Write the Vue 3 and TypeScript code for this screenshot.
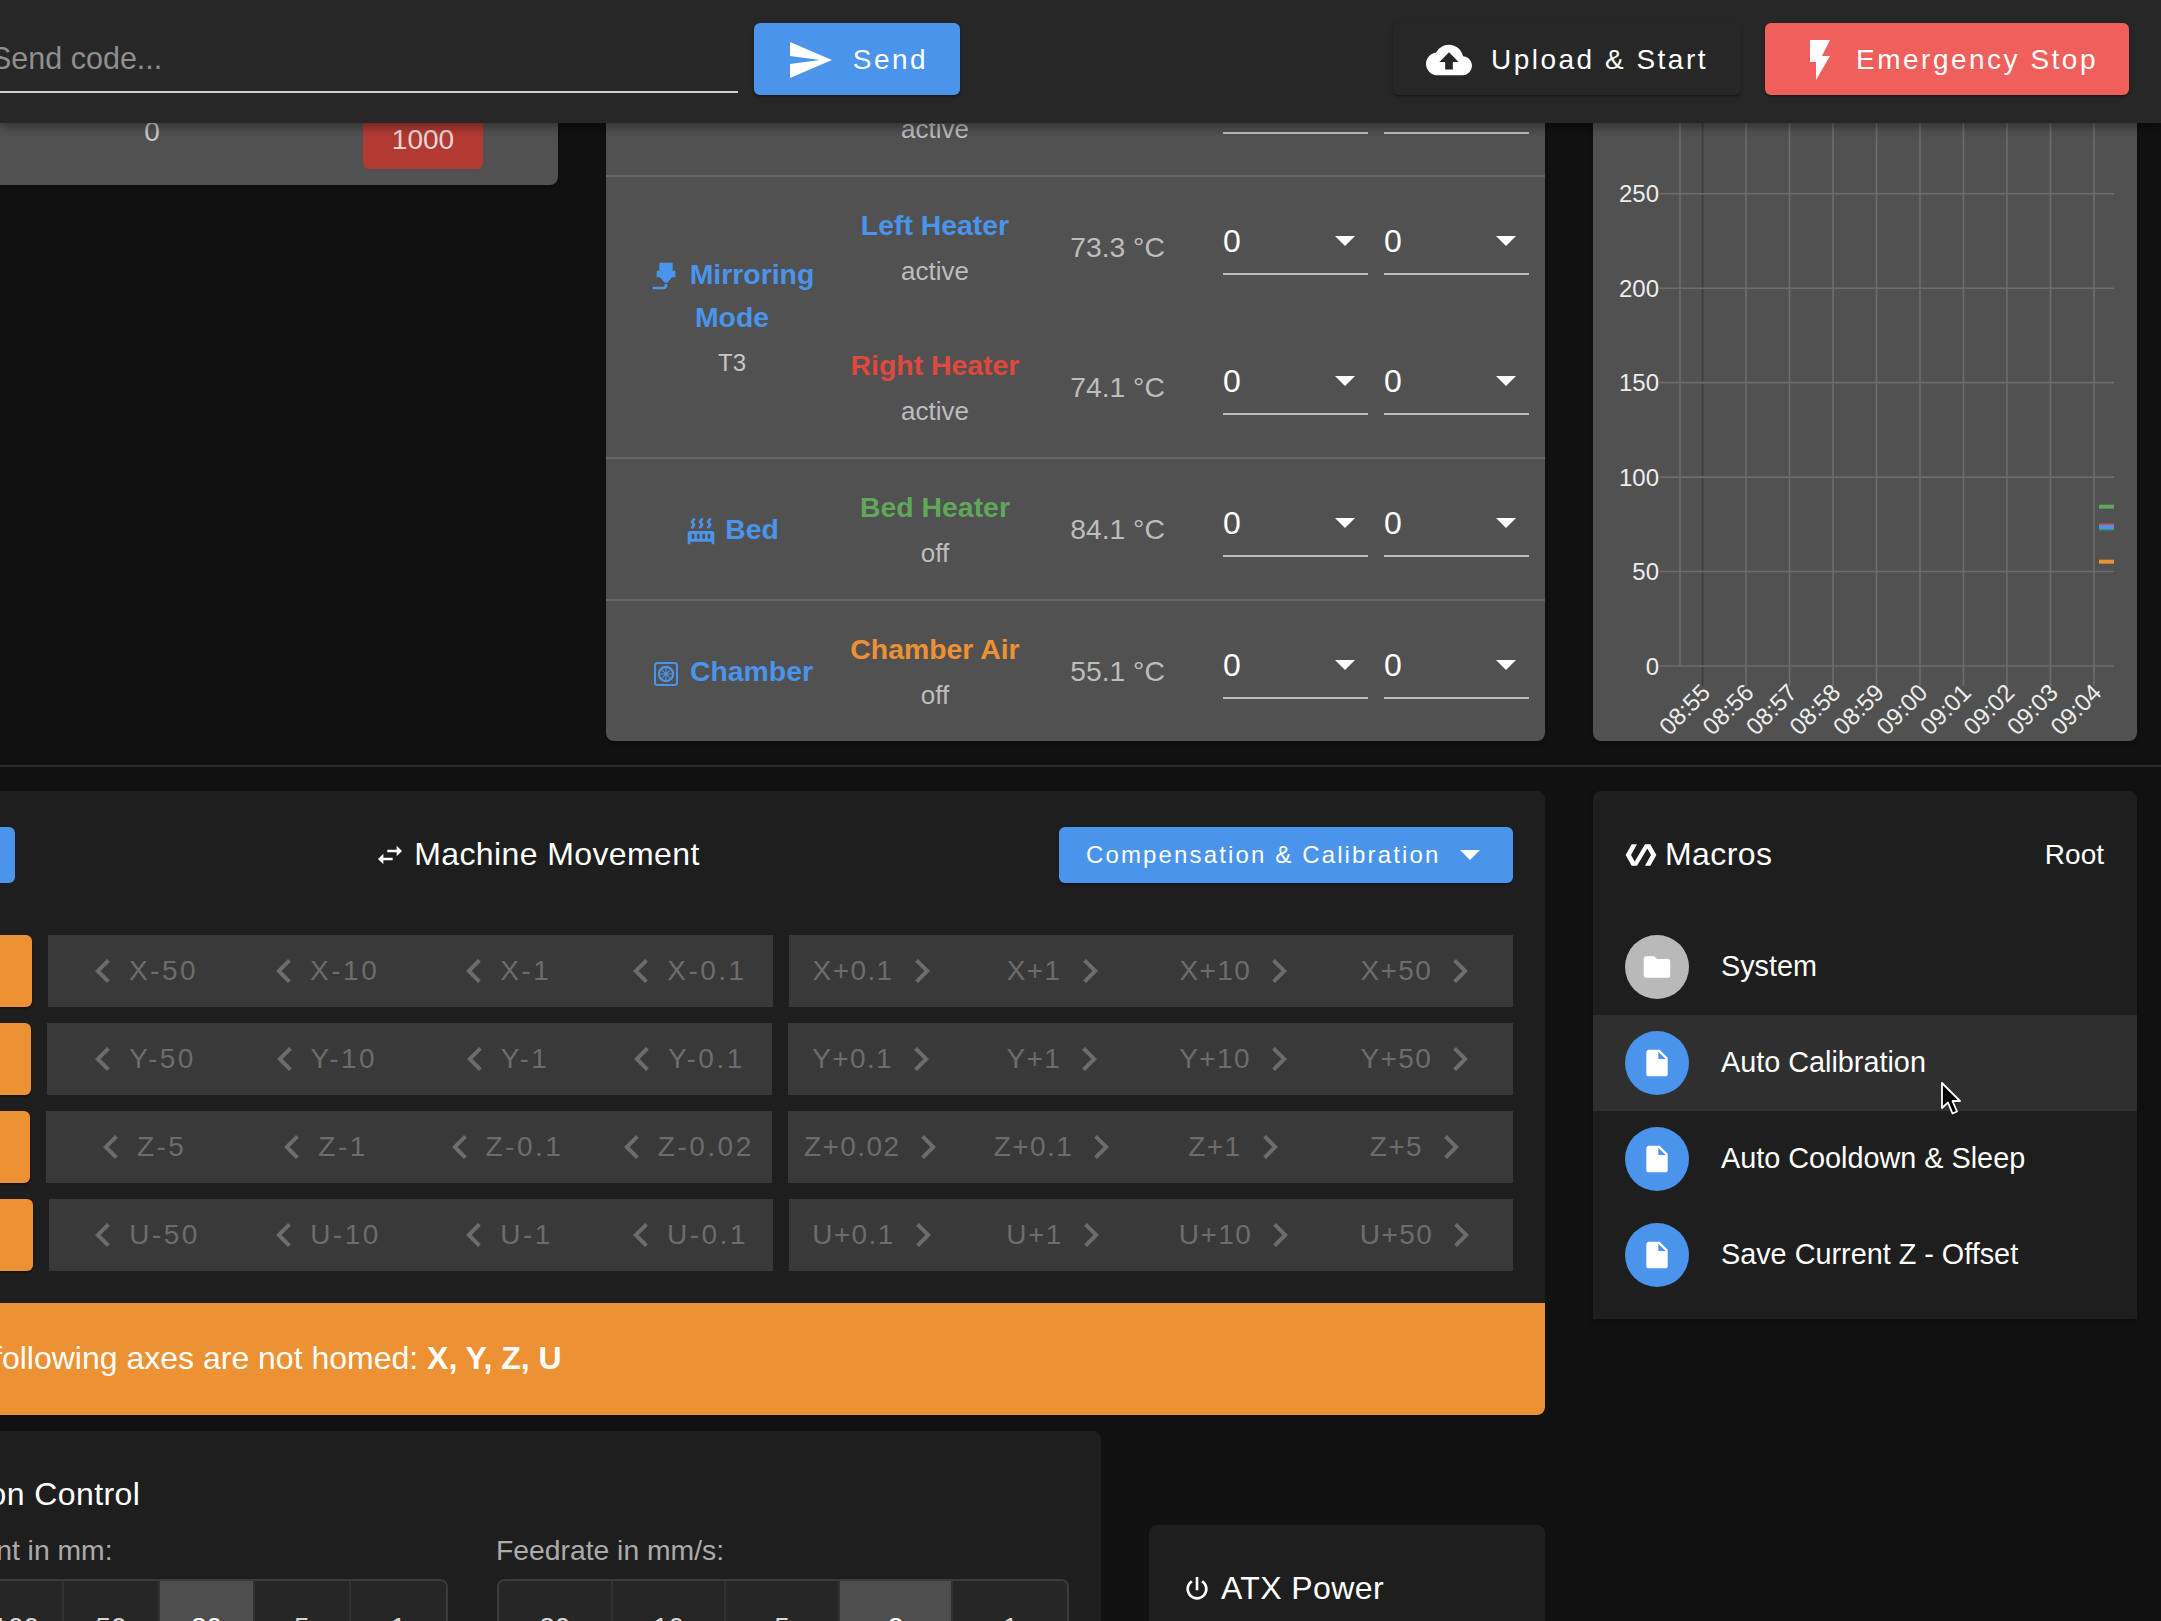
<template>
  <div class="page">
    <header class="topbar">
      <div class="code-input"><span>Send code...</span></div>
      <button class="btn btn-blue btn-send">
        <svg class="icon48" viewBox="0 0 24 24"><path :d="icons.send" /></svg>
        Send
      </button>
      <button class="btn btn-dark btn-upload">
        <svg class="icon46" viewBox="0 0 24 24"><path :d="icons.upload" /></svg>
        Upload &amp; Start
      </button>
      <button class="btn btn-red btn-stop">
        <svg class="icon48" viewBox="0 0 24 24"><path :d="icons.flash" /></svg>
        Emergency Stop
      </button>
    </header>

    <section class="top-row">
      <div class="panel fans-tail">
        <span class="fan-value">0</span>
        <span class="fan-limit">1000</span>
      </div>

      <div class="panel tools">
        <div class="tool-row row-cut">
          <div></div>
          <div class="heater-cut">active</div>
          <div></div>
          <div class="select-cut"><i></i><i></i></div>
        </div>

        <div v-for="tool in tools" :key="tool.name" class="tool-row">
          <div class="tool-name" :class="{ 'has-sub': tool.sub }">
            <div class="tool-title">
              <svg v-if="tool.icon === 'nozzle'" class="icon32" viewBox="0 0 24 24"><path :d="icons.nozzle" /></svg>
              <svg v-else-if="tool.icon === 'bed'" class="icon32" viewBox="0 0 24 24"><path :d="icons.radiator" /></svg>
              <svg v-else class="icon-chamber" viewBox="0 0 24 24">
                <rect x="1" y="1" width="22" height="22" rx="2.5" />
                <circle cx="12" cy="12" r="7.2" />
                <path d="M12 4.8V19.2M4.8 12H19.2M6.9 6.9L17.1 17.1M17.1 6.9L6.9 17.1" />
              </svg>{{ tool.name }}
            </div>
            <div v-if="tool.sub" class="tool-sub">{{ tool.sub }}</div>
          </div>
          <div class="heaters">
            <div v-for="h in tool.heaters" :key="h.name" class="heater">
              <div class="heater-name">
                <span class="heater-title" :class="h.color">{{ h.name }}</span>
                <span class="heater-state">{{ h.state }}</span>
              </div>
              <div class="heater-temp">{{ h.temp }}</div>
              <div class="heater-select">0<svg viewBox="0 0 20 10"><path d="M0 0H20L10 10Z" /></svg></div>
              <div class="heater-select">0<svg viewBox="0 0 20 10"><path d="M0 0H20L10 10Z" /></svg></div>
            </div>
          </div>
        </div>
      </div>

      <div class="panel chart">
        <svg viewBox="1593 123 544 617" width="544" height="617">
          <line x1="1680" y1="123" x2="1680" y2="666" class="grid" />
          <line v-for="(t, i) in times" :key="t" :x1="tickX(i)" y1="123" :x2="tickX(i)" y2="686" :class="i === 0 ? 'grid-dark' : 'grid'" />
          <g v-for="v in yTicks" :key="v">
            <line x1="1660" :y1="tickY(v)" x2="2114" :y2="tickY(v)" class="grid" />
            <text x="1659" :y="tickY(v) + 8.5" text-anchor="end" class="axis">{{ v }}</text>
          </g>
          <text v-for="(t, i) in times" :key="t + 'l'" text-anchor="end" class="axis" :transform="`translate(${tickX(i) + 9} 694) rotate(-45)`">{{ t }}</text>
          <line x1="2099" y1="506.7" x2="2114" y2="506.7" class="trace" stroke="#5fa85a" />
          <line x1="2099" y1="525.5" x2="2114" y2="525.5" class="trace" stroke="#e0483e" />
          <line x1="2099" y1="528.5" x2="2114" y2="528.5" class="trace" stroke="#3f8a70" />
          <line x1="2099" y1="527" x2="2114" y2="527" class="trace" stroke="#4a94ec" />
          <line x1="2099" y1="561.7" x2="2114" y2="561.7" class="trace" stroke="#ed9234" />
        </svg>
      </div>
    </section>

    <div class="rule"></div>

    <section class="lower">
      <div class="lower-main">
        <div class="movement">
          <div class="movement-head">
            <span class="home-tail"></span>
            <h3 class="card-title">
              <svg class="icon32" viewBox="0 0 24 24"><path :d="icons.swap" /></svg>Machine Movement
            </h3>
            <button class="btn-comp">
              Compensation &amp; Calibration
              <svg viewBox="0 0 20 10"><path d="M0 0H20L10 10Z" /></svg>
            </button>
          </div>
          <div v-for="row in moveRows" :key="row.axis" class="move-row" :style="{ gridTemplateColumns: `${row.homeWidth}px 1fr 1fr` }">
            <div class="home-btn"></div>
            <div class="move-group">
              <div v-for="s in row.steps" :key="s" class="move-step">
                <svg class="icon48" viewBox="0 0 24 24"><path :d="icons.left" /></svg>{{ row.axis }}-{{ s }}
              </div>
            </div>
            <div class="move-group move-plus">
              <div v-for="s in [...row.steps].reverse()" :key="s" class="move-step">
                {{ row.axis }}+{{ s }}<svg class="icon48" viewBox="0 0 24 24"><path :d="icons.right" /></svg>
              </div>
            </div>
          </div>
        </div>

        <div class="alert">
          <span>The following axes are not homed: <strong>X, Y, Z, U</strong></span>
        </div>

        <div class="bottom-row">
          <div class="extrusion">
            <h3 class="card-title extrusion-title">Extrusion Control</h3>
            <div class="extrusion-cols">
              <div class="amount-col">
                <div class="field-label label-amount">Feed amount in mm:</div>
                <div class="toggle toggle-amount">
                  <span v-for="a in amounts" :key="a" :class="{ on: a === 20 }">{{ a }}</span>
                </div>
              </div>
              <div class="rate-col">
                <div class="field-label">Feedrate in mm/s:</div>
                <div class="toggle toggle-rate">
                  <span v-for="r in rates" :key="r" :class="{ on: r === 2 }">{{ r }}</span>
                </div>
              </div>
            </div>
          </div>

          <div class="atx">
            <h3 class="card-title">
              <svg class="icon32" viewBox="0 0 24 24"><path :d="icons.power" /></svg>ATX Power
            </h3>
          </div>
        </div>
      </div>

      <aside class="macros">
        <div class="macros-head">
          <h3 class="card-title">
            <svg class="icon32" viewBox="0 0 24 24"><path :d="icons.polymer" /></svg>Macros
          </h3>
          <span class="macros-root">Root</span>
        </div>
        <div v-for="m in macros" :key="m.name" class="macro" :class="{ hover: m.hover }">
          <span class="avatar" :class="{ folder: m.folder }">
            <svg class="icon32" viewBox="0 0 24 24"><path :d="m.folder ? icons.folder : icons.file" /></svg>
          </span>
          <span class="macro-name">{{ m.name }}</span>
          <svg v-if="m.hover" class="cursor" viewBox="0 0 22 36">
            <path d="M2 2V27L8 21.5L12.5 32.5L17 30.5L12.5 20H20Z" />
          </svg>
        </div>
      </aside>
    </section>
  </div>
</template>

<script setup lang="ts">
interface Heater {
  name: string
  color: string
  state: string
  temp: string
}

interface Tool {
  name: string
  icon: 'nozzle' | 'bed' | 'chamber'
  sub?: string
  heaters: Heater[]
}

const icons = {
  send: 'M2,21L23,12L2,3V10L17,12L2,14V21Z',
  upload: 'M14,13V17H10V13H7L12,8L17,13M19.35,10.03C18.67,6.59 15.64,4 12,4C9.11,4 6.6,5.64 5.35,8.03C2.34,8.36 0,10.9 0,14A6,6 0 0,0 6,20H19A5,5 0 0,0 24,15C24,12.36 21.95,10.22 19.35,10.03Z',
  flash: 'M7,2V13H10V22L17,10H13L17,2H7Z',
  nozzle: 'M7,2H17V8H19V13H16.5L13,17H11L7.5,13H5V8H7V2M10,22H2V20H10A1,1 0 0,0 11,19V18H13V19A3,3 0 0,1 10,22Z',
  radiator: 'M7.95,3L6.53,5.19L7.95,7.4H7.94L5.95,10.5L4.22,9.6L5.64,7.39L4.22,5.19L6.22,2.09L7.95,3M13.95,2.89L12.53,5.1L13.95,7.3L13.94,7.31L11.95,10.4L10.22,9.5L11.64,7.3L10.22,5.1L12.22,2L13.95,2.89M20,2.89L18.56,5.1L20,7.3V7.31L18,10.4L16.25,9.5L17.67,7.3L16.25,5.1L18.25,2L20,2.89M2,22V14A2,2 0 0,1 4,12H20A2,2 0 0,1 22,14V22H20V20H4V22H2M6,14A1,1 0 0,0 5,15V17A1,1 0 0,0 6,18A1,1 0 0,0 7,17V15A1,1 0 0,0 6,14M10,14A1,1 0 0,0 9,15V17A1,1 0 0,0 10,18A1,1 0 0,0 11,17V15A1,1 0 0,0 10,14M14,14A1,1 0 0,0 13,15V17A1,1 0 0,0 14,18A1,1 0 0,0 15,17V15A1,1 0 0,0 14,14M18,14A1,1 0 0,0 17,15V17A1,1 0 0,0 18,18A1,1 0 0,0 19,17V15A1,1 0 0,0 18,14Z',
  swap: 'M21,9L17,5V8H10V10H17V13M7,11L3,15L7,19V16H14V14H7V11Z',
  left: 'M15.41,16.58L10.83,12L15.41,7.41L14,6L8,12L14,18L15.41,16.58Z',
  right: 'M8.59,16.58L13.17,12L8.59,7.41L10,6L16,12L10,18L8.59,16.58Z',
  power: 'M16.56,5.44L15.11,6.89C16.84,7.94 18,9.83 18,12A6,6 0 0,1 12,18A6,6 0 0,1 6,12C6,9.83 7.16,7.94 8.88,6.88L7.44,5.44C5.36,6.88 4,9.28 4,12A8,8 0 0,0 12,20A8,8 0 0,0 20,12C20,9.28 18.64,6.88 16.56,5.44M13,3H11V13H13',
  polymer: 'M19,4H15L7.27,16.84L4.5,12L9,4H5L.5,12L5,20H9L16.73,7.16L19.5,12L15,20H19L23.5,12L19,4Z',
  folder: 'M10,4H4C2.89,4 2,4.89 2,6V18A2,2 0 0,0 4,20H20A2,2 0 0,0 22,18V8C22,6.89 21.1,6 20,6H12L10,4Z',
  file: 'M13,9V3.5L18.5,9M6,2C4.89,2 4,2.89 4,4V20A2,2 0 0,0 6,22H18A2,2 0 0,0 20,20V8L14,2H6Z'
}

const tools: Tool[] = [
  {
    name: 'Mirroring Mode',
    icon: 'nozzle',
    sub: 'T3',
    heaters: [
      { name: 'Left Heater', color: 'c-blue', state: 'active', temp: '73.3 °C' },
      { name: 'Right Heater', color: 'c-red', state: 'active', temp: '74.1 °C' }
    ]
  },
  {
    name: 'Bed',
    icon: 'bed',
    heaters: [{ name: 'Bed Heater', color: 'c-green', state: 'off', temp: '84.1 °C' }]
  },
  {
    name: 'Chamber',
    icon: 'chamber',
    heaters: [{ name: 'Chamber Air', color: 'c-orange', state: 'off', temp: '55.1 °C' }]
  }
]

const times = ['08:55', '08:56', '08:57', '08:58', '08:59', '09:00', '09:01', '09:02', '09:03', '09:04']
const yTicks = [250, 200, 150, 100, 50, 0]

// chart scale, in reference pixels
const tickX = (i: number) => 1702.6 + i * 43.48
const tickY = (v: number) => 666 - v * 1.889

const xySteps = [50, 10, 1, 0.1]
const moveRows = [
  { axis: 'X', homeWidth: 32, steps: xySteps },
  { axis: 'Y', homeWidth: 31, steps: xySteps },
  { axis: 'Z', homeWidth: 30, steps: [5, 1, 0.1, 0.02] },
  { axis: 'U', homeWidth: 33, steps: xySteps }
]

const amounts = [100, 50, 20, 5, 1]
const rates = [20, 10, 5, 2, 1]

const macros = [
  { name: 'System', folder: true, hover: false },
  { name: 'Auto Calibration', folder: false, hover: true },
  { name: 'Auto Cooldown & Sleep', folder: false, hover: false },
  { name: 'Save Current Z - Offset', folder: false, hover: false }
]
</script>

<style>
html,
body {
  margin: 0;
  background: #111111;
}
</style>

<style scoped>
.page {
  position: relative;
  width: 2161px;
  height: 1621px;
  overflow: hidden;
  background: #111111;
  color: #fff;
  font-family: "Liberation Sans", Arial, sans-serif;
}

svg {
  fill: currentColor;
  flex: none;
}

.icon32 { width: 32px; height: 32px; }
.icon46 { width: 46px; height: 46px; }
.icon48 { width: 48px; height: 48px; }

/* top bar */
.topbar {
  position: relative;
  z-index: 2;
  display: flex;
  align-items: center;
  height: 123px;
  padding: 0 32px 5px 0;
  box-sizing: border-box;
  background: #272727;
  box-shadow: 0 4px 10px rgba(0, 0, 0, 0.4);
}

.code-input {
  flex: none;
  width: 738px;
  height: 70px;
  margin-top: -2px;
  box-sizing: border-box;
  border-bottom: 2px solid #cfcfcf;
  color: #8f8f8f;
  font-size: 30.5px;
  line-height: 70px;
  overflow: hidden;
  white-space: nowrap;
}

.code-input span {
  display: block;
  margin-left: -9px;
}

.btn {
  display: flex;
  align-items: center;
  justify-content: center;
  gap: 19px;
  height: 72px;
  padding: 2px 0 0;
  box-sizing: border-box;
  border: 0;
  border-radius: 6px;
  color: #fff;
  font-family: inherit;
  font-size: 28px;
  letter-spacing: 2.5px;
  box-shadow: 0 3px 1px -2px rgba(0, 0, 0, 0.2), 0 2px 2px rgba(0, 0, 0, 0.14), 0 1px 5px rgba(0, 0, 0, 0.12);
}

.btn-blue { background: #4a94ec; }
.btn-dark { background: #272727; }
.btn-red { background: #ef5f5b; }

.btn-send { width: 206px; margin-left: 16px; }
.btn-upload { width: 348px; margin-left: auto; }
.btn-stop { width: 364px; margin-left: 24px; gap: 12px; }

/* upper row */
.top-row {
  display: flex;
  align-items: flex-start;
  height: 642px;
}

.panel {
  background: #515151;
  box-sizing: border-box;
  box-shadow: 0 3px 3px -2px rgba(0, 0, 0, 0.2), 0 3px 4px rgba(0, 0, 0, 0.14);
  border-radius: 0 0 8px 8px;
}

.fans-tail {
  display: flex;
  flex: none;
  align-items: flex-start;
  width: 578px;
  height: 62px;
  margin-left: -20px;
  margin-right: 48px;
  color: #c9c9c9;
  font-size: 28px;
}

.fan-value {
  width: 344px;
  margin-top: -7px;
  line-height: 32px;
  text-align: center;
}

.fan-limit {
  width: 120px;
  height: 46px;
  margin-left: 39px;
  padding-top: 1px;
  box-sizing: border-box;
  line-height: 32px;
  text-align: center;
  background: #b33a32;
  border-radius: 0 0 6px 6px;
  color: #e6d6d4;
}

.tools {
  flex: none;
  width: 939px;
  height: 618px;
}

.tool-row {
  display: grid;
  grid-template-columns: 236px 1fr;
  border-bottom: 2px solid #676767;
}

.tool-row:last-child {
  border-bottom: 0;
}

.row-cut {
  grid-template-columns: 236px 186px 179px 1fr;
  height: 54px;
  box-sizing: border-box;
}

.heater-cut {
  color: #bdbdbd;
  font-size: 26px;
  line-height: 12px;
  text-align: center;
}

.select-cut {
  display: flex;
  gap: 16px;
  padding-left: 16px;
}

.select-cut i {
  width: 145px;
  height: 9px;
  border-bottom: 2px solid #bdbdbd;
}

.tool-name {
  align-self: center;
  padding-left: 16px;
  text-align: center;
}

.tool-name.has-sub {
  padding-top: 5px;
}

.tool-title {
  color: #4a94ec;
  font-size: 28.4px;
  font-weight: 700;
  line-height: 43px;
}

.tool-title svg {
  margin-right: 8px;
  vertical-align: -8px;
}

.tool-title .icon-chamber {
  margin-left: 3px;
  margin-right: 12px;
  vertical-align: -5px;
}

.icon-chamber {
  width: 24px;
  height: 24px;
  fill: none;
  stroke: currentColor;
}

.icon-chamber rect { stroke-width: 2; }
.icon-chamber circle { stroke-width: 2.2; }
.icon-chamber path { stroke-width: 1.2; }

.tool-sub {
  color: #c6c6c6;
  font-size: 24px;
  line-height: 48px;
}

.heater {
  display: grid;
  grid-template-columns: 186px 179px 161px 161px;
  height: 140px;
}

.heater-name {
  display: flex;
  flex-direction: column;
  align-items: center;
  padding-top: 26px;
  white-space: nowrap;
}

.heater-title {
  font-size: 28.4px;
  font-weight: 700;
  line-height: 44px;
}

.heater-state {
  color: #bdbdbd;
  font-size: 26px;
  line-height: 48px;
}

.c-blue { color: #4a94ec; }
.c-red { color: #e0483e; }
.c-green { color: #5fa85a; }
.c-orange { color: #ed9234; }

.heater-temp {
  align-self: center;
  color: #bdbdbd;
  font-size: 28.3px;
  text-align: center;
}

.heater-select {
  display: flex;
  justify-content: space-between;
  height: 54px;
  margin: 44px 0 0 16px;
  padding: 0 13px 0 0;
  box-sizing: border-box;
  border-bottom: 2px solid #bdbdbd;
  color: #fff;
  font-size: 32px;
  line-height: 40px;
}

.heater-select svg {
  width: 20px;
  height: 10px;
  margin-top: 15px;
}

.chart {
  flex: none;
  width: 544px;
  height: 618px;
  margin-left: 48px;
}

.chart svg {
  display: block;
}

.grid { stroke: #6d6d6d; stroke-width: 1.6; }
.grid-dark { stroke: #3e3e3e; stroke-width: 1.6; }
.trace { stroke-width: 4; }
.axis { fill: #ededed; font-size: 24px; }

.rule {
  height: 2px;
  background: #2c2c2c;
}

/* lower part */
.lower {
  display: flex;
  align-items: flex-start;
  gap: 48px;
  padding-top: 24px;
}

.lower-main {
  flex: none;
  width: 1545px;
}

.movement {
  height: 512px;
  padding: 36px 32px 0 0;
  box-sizing: border-box;
  background: #1e1e1e;
  border-radius: 0 8px 0 0;
}

.movement-head {
  display: flex;
  align-items: center;
  justify-content: space-between;
  height: 56px;
  margin-bottom: 52px;
}

.movement-head .card-title {
  margin-top: -2px;
}

.home-tail {
  width: 15px;
  height: 56px;
  background: #4a94ec;
  border-radius: 0 6px 6px 0;
}

.card-title {
  margin: 0;
  color: #fff;
  font-size: 32px;
  font-weight: 400;
  letter-spacing: 0.4px;
  line-height: 40px;
  white-space: nowrap;
}

.card-title svg {
  margin-right: 8px;
  vertical-align: -6px;
}

.btn-comp {
  display: flex;
  align-items: center;
  width: 454px;
  height: 56px;
  padding: 0 0 0 27px;
  box-sizing: border-box;
  border: 0;
  border-radius: 6px;
  background: #4a94ec;
  color: #fff;
  font-family: inherit;
  font-size: 24px;
  letter-spacing: 2.14px;
  white-space: nowrap;
  box-shadow: 0 3px 1px -2px rgba(0, 0, 0, 0.2), 0 2px 2px rgba(0, 0, 0, 0.14);
}

.btn-comp svg {
  width: 20px;
  height: 10px;
  margin-left: 20px;
}

.move-row {
  display: grid;
  gap: 16px;
  height: 72px;
  margin-bottom: 16px;
}

.home-btn {
  background: #ed9234;
  border-radius: 0 6px 6px 0;
  box-shadow: 0 2px 2px rgba(0, 0, 0, 0.3);
}

.move-group {
  display: grid;
  grid-template-columns: repeat(4, 1fr);
  background: #393939;
}

.move-step {
  display: flex;
  align-items: center;
  justify-content: center;
  gap: 2px;
  color: #6c6c6c;
  font-size: 28px;
  letter-spacing: 2.5px;
  white-space: nowrap;
}

.move-plus .move-step {
  gap: 4px;
  letter-spacing: 1.4px;
}

.alert {
  display: flex;
  align-items: center;
  height: 112px;
  background: #ed9234;
  border-radius: 0 0 8px 0;
  color: #fff;
  font-size: 32px;
  white-space: nowrap;
}

.alert span {
  margin-left: -71px;
  margin-top: -2px;
}

.bottom-row {
  display: flex;
  align-items: flex-start;
  gap: 48px;
  margin-top: 16px;
}

.extrusion {
  flex: none;
  width: 1262px;
  height: 300px;
  margin-left: -161px;
  padding: 43px 32px 0;
  box-sizing: border-box;
  background: #1e1e1e;
  border-radius: 8px 8px 0 0;
}

.extrusion-title {
  margin-left: 17px;
}

.extrusion-cols {
  display: flex;
  gap: 49px;
  margin-top: 16px;
}

.amount-col { width: 577px; }
.rate-col { width: 572px; }

.field-label {
  margin-bottom: 9px;
  color: #ababab;
  font-size: 28.3px;
  line-height: 40px;
  white-space: nowrap;
}

.label-amount {
  margin-left: -18px;
}

.rate-col .field-label {
  margin-left: -1px;
}

.toggle {
  display: grid;
  grid-template-columns: repeat(5, 1fr);
  border: 2px solid #3b3b3b;
  border-radius: 8px 8px 0 0;
  height: 98px;
  box-sizing: border-box;
  overflow: hidden;
}

.toggle-amount {
  margin-left: 96px;
}

.toggle span {
  background: #262626;
  border-right: 2px solid #313131;
  color: #d6d6d6;
  font-size: 28px;
  line-height: 94px;
  text-align: center;
}

.toggle span:last-child {
  border-right: 0;
}

.toggle span.on {
  background: #4e4e4e;
  color: #fff;
}

.atx {
  flex: none;
  width: 396px;
  height: 200px;
  margin-top: 94px;
  padding: 43px 32px 0;
  box-sizing: border-box;
  background: #1e1e1e;
  border-radius: 8px 8px 0 0;
}

.macros {
  flex: none;
  width: 544px;
  padding: 43px 0 16px;
  box-sizing: border-box;
  background: #1e1e1e;
  border-radius: 8px 8px 0 0;
  box-shadow: 0 3px 6px rgba(0, 0, 0, 0.25);
}

.macros-head {
  display: flex;
  align-items: center;
  justify-content: space-between;
  padding: 0 33px 0 32px;
  margin-bottom: 45px;
}

.macros-root {
  margin-top: 2px;
  font-size: 28px;
}

.macro {
  position: relative;
  display: flex;
  align-items: center;
  gap: 32px;
  height: 96px;
  padding-left: 32px;
  font-size: 28.8px;
}

.macro-name {
  margin-top: -2px;
}

.macro.hover {
  background: #2f2f2f;
}

.avatar {
  display: flex;
  align-items: center;
  justify-content: center;
  width: 64px;
  height: 64px;
  border-radius: 50%;
  background: #4a94ec;
}

.avatar.folder {
  background: #b9b9b9;
}

/* mouse pointer caught in the screenshot */
.cursor {
  position: absolute;
  left: 347px;
  top: 66px;
  width: 22px;
  height: 36px;
  fill: #000;
  stroke: #fff;
  stroke-width: 1.8;
  stroke-linejoin: round;
}
</style>
